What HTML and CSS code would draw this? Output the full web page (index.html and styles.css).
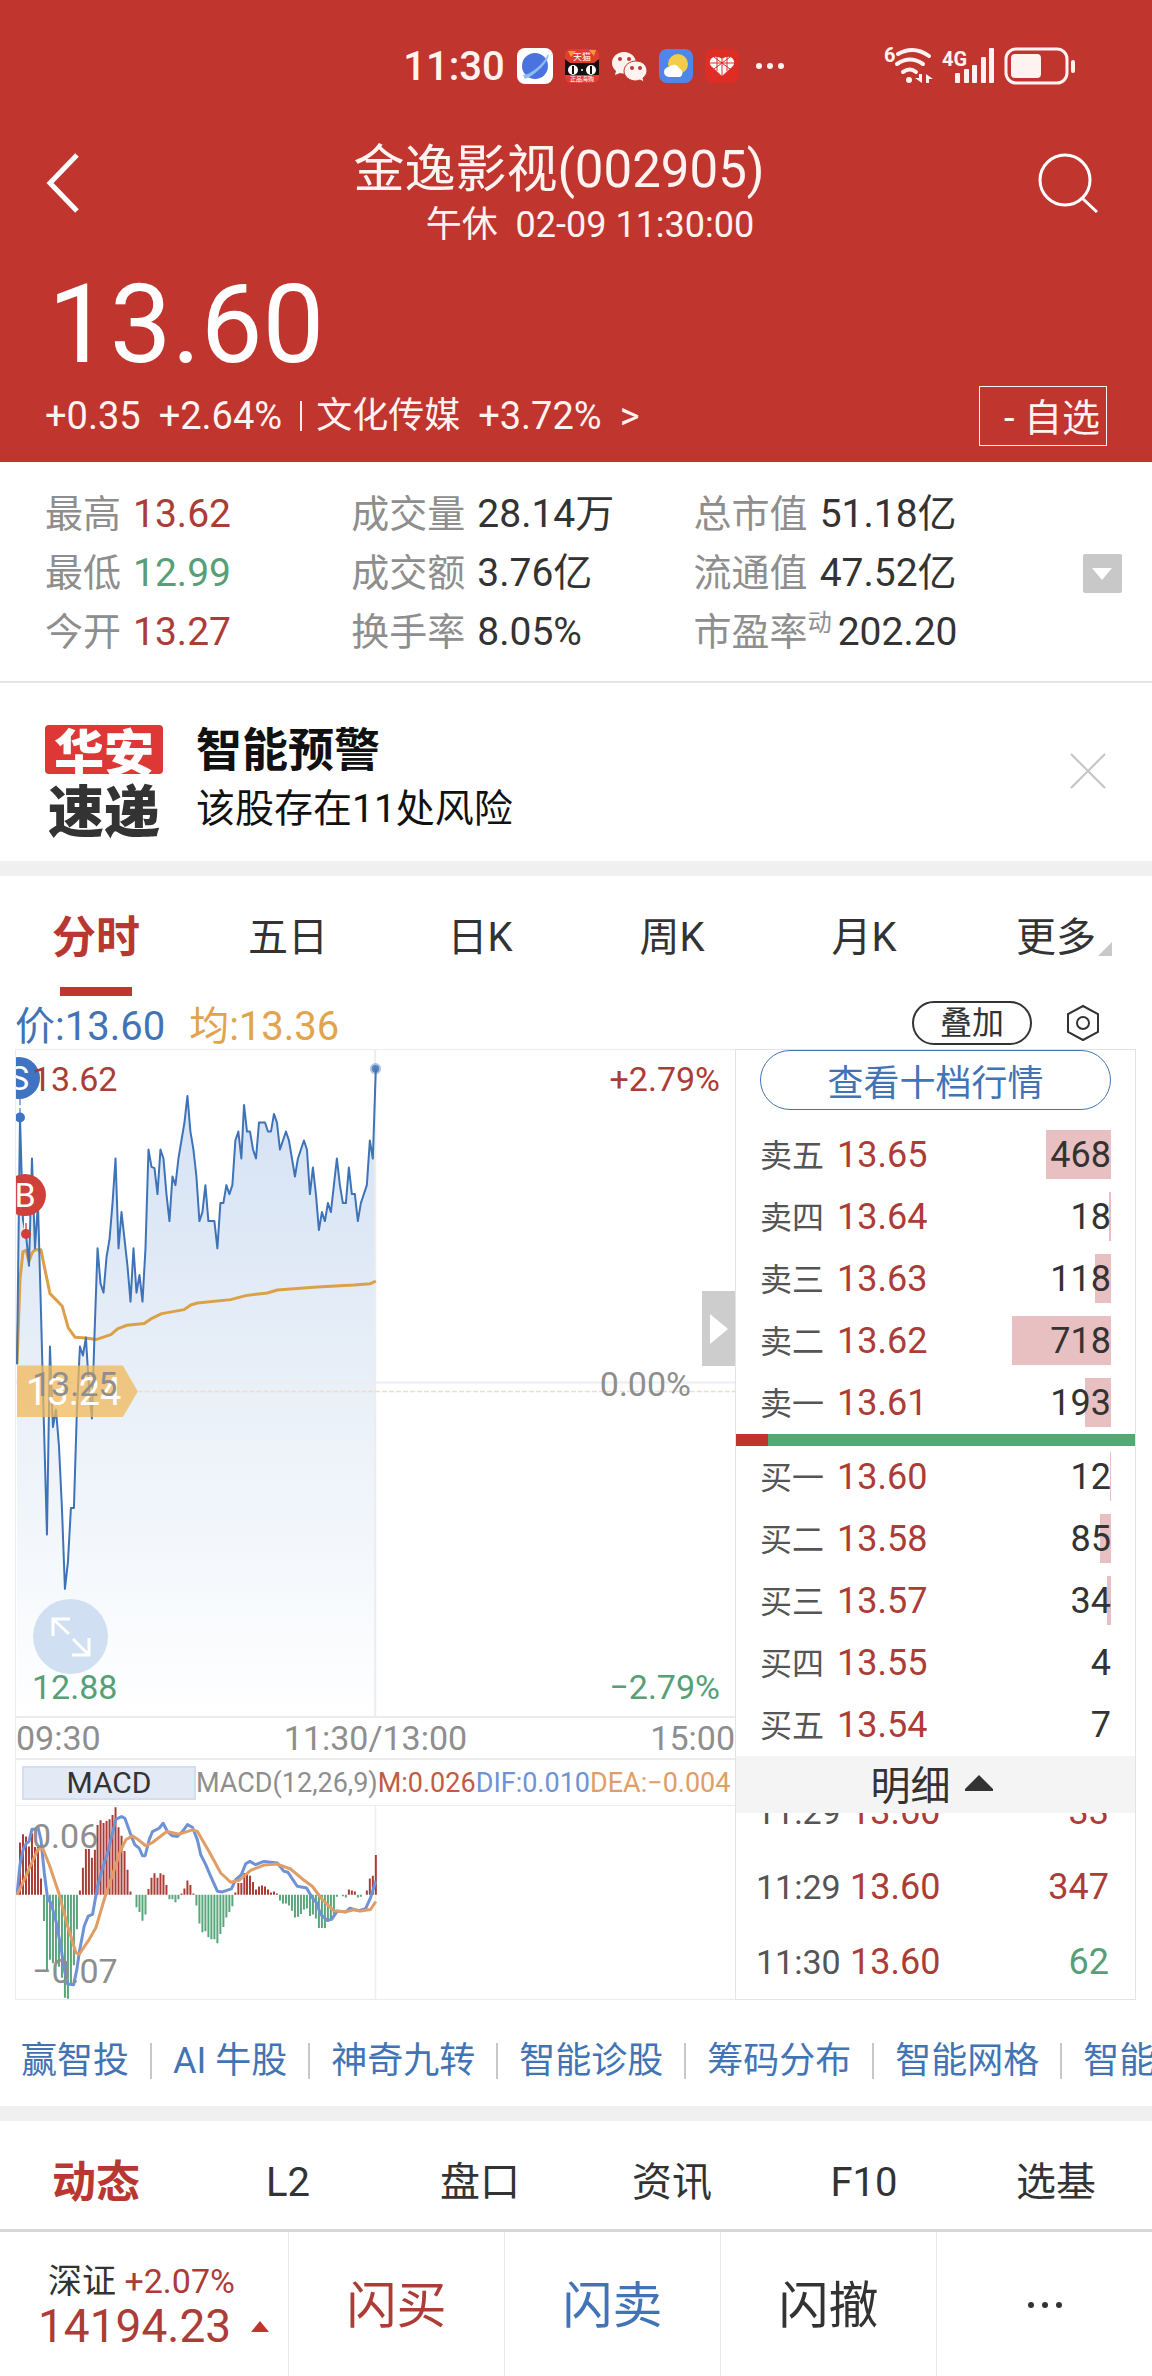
FILE: index.html
```html
<!DOCTYPE html>
<html lang="zh-CN">
  <head>
    <meta charset="utf-8">
    <meta name="viewport" content="width=device-width, initial-scale=1">
    <title>金逸影视(002905)</title>
    <link rel="stylesheet" href="styles.css">
  </head>

  <body>
    <header class="header">
      <div class="status">
        <span class="clock">11:30</span>
        <svg class="app" viewBox="0 0 36 36">
          <rect width="36" height="36" rx="8" fill="#fff" />
          <circle cx="18" cy="18" r="13" fill="#4a73dd" />
          <path d="M6 27C13 27 27 16 31 6C35 9 20 27 8 31Z" fill="#8fbcf5" />
        </svg>
        <svg class="app small" viewBox="0 0 34 34">
          <rect width="34" height="34" rx="6" fill="#e23d2c" />
          <path d="M3 2h8l-5 6zM24 1h7l-2 6z" fill="#f39a3c" />
          <text x="17" y="11" font-size="9" fill="#fff" text-anchor="middle">天猫</text>
          <path d="M0 10L5 14H29L34 10V26H0Z" fill="#15100f" />
          <ellipse cx="8" cy="21" rx="5" ry="5" fill="#fff" />
          <ellipse cx="26" cy="21" rx="5" ry="5" fill="#fff" />
          <path d="M8 17v8M26 17v8" stroke="#15100f" stroke-width="2" />
          <circle cx="17" cy="21" r="1" fill="#fff" />
          <text x="17" y="32" font-size="6" fill="#fff" text-anchor="middle">正品海购</text>
        </svg>
        <svg class="app" viewBox="0 0 36 34">
          <g fill="#fff3f2">
            <path d="M13 3C6 3 1 8 1 14c0 4 2 6 4 8l-1 4 5-2c8 2 16-2 16-10C25 8 20 3 13 3Z" />
            <path d="M25 12c-6 0-12 4-12 10s6 10 12 10l4-1 4 2-1-4c2-2 4-4 4-7 0-6-5-10-11-10Z" stroke="#c0362f" stroke-width="1" />
          </g>
          <g fill="#c0362f">
            <circle cx="9" cy="10" r="2" /><circle cx="18" cy="10" r="2" />
            <circle cx="21" cy="19" r="2" /><circle cx="29" cy="19" r="2" />
          </g>
        </svg>
        <svg class="app small" viewBox="0 0 34 34">
          <rect width="34" height="34" rx="8" fill="#4f86ea" />
          <circle cx="19" cy="15" r="10" fill="#f5cb4b" />
          <path d="M10 28a5 5 0 0 1 0-10a6 6 0 0 1 10 1a5 5 0 0 1 1 9Z" fill="#fff" />
        </svg>
        <svg class="app small" viewBox="0 0 34 34">
          <rect width="34" height="34" rx="8" fill="#de2d25" />
          <path d="M17 27L6 17C2 11 9 4 17 10C25 4 32 11 28 17Z" fill="#fff" />
          <path d="M17 10v17M9 8l16 12M25 8L9 20M5 14h24M12 7v15M22 7v15" stroke="#de2d25" stroke-width="1" />
        </svg>
        <svg class="dots" viewBox="0 0 30 8" fill="#fff3f2">
          <circle cx="4" cy="4" r="3" /><circle cx="15" cy="4" r="3" /><circle cx="26" cy="4" r="3" />
        </svg>
        <div class="signals">
          <svg width="50" height="38" viewBox="0 0 50 38" fill="none" stroke="#fff3f2" stroke-linecap="round">
            <text x="0" y="15" font-size="20" font-weight="700" fill="#fff3f2" stroke="none">6</text>
            <path d="M14 7Q30-2 45 9" stroke-width="4" />
            <path d="M13 17Q26 8 39 17" stroke-width="4" />
            <path d="M19 25Q26 20 32 25" stroke-width="4" />
            <circle cx="25" cy="33" r="3" fill="#fff3f2" stroke="none" />
            <path d="M38 27V36L31 31H35V27ZM42 27L49 32H45V36H42Z" fill="#fff3f2" stroke="none" />
          </svg>
          <svg width="54" height="38" viewBox="0 0 54 38" fill="#fff3f2">
            <text x="0" y="19" font-size="20" font-weight="700">4G</text>
            <rect x="13" y="26" width="5" height="10" rx="1" />
            <rect x="22" y="22" width="5" height="14" rx="1" />
            <rect x="30" y="18" width="5" height="18" rx="1" />
            <rect x="39" y="10" width="5" height="26" rx="1" />
            <rect x="47" y="1" width="5" height="35" rx="1" />
          </svg>
          <svg width="72" height="38" viewBox="0 0 72 38">
            <rect x="2" y="2" width="61" height="34" rx="10" fill="none" stroke="#fff3f2" stroke-width="3" />
            <rect x="7" y="7" width="30" height="24" rx="4" fill="#fff3f2" />
            <rect x="67" y="13" width="4" height="13" rx="2" fill="#fff3f2" />
          </svg>
        </div>
      </div>

      <div class="nav">
        <button class="icon-btn" aria-label="返回">
          <svg width="34" height="60" viewBox="0 0 34 60" fill="none" stroke="#fff" stroke-width="5"><path d="M31 2L4 30L31 58" /></svg>
        </button>
        <div class="title">
          <h1>金逸影视(002905)</h1>
          <p>午休&nbsp; 02-09 11:30:00</p>
        </div>
        <button class="icon-btn" aria-label="搜索">
          <svg width="60" height="60" viewBox="0 0 60 60" fill="none" stroke="#fff" stroke-width="3"><circle cx="27" cy="27" r="25" /><path d="M44 45L59 59" /></svg>
        </button>
      </div>

      <div class="price">13.60</div>
      <div class="change">
        <span>+0.35</span>
        <span class="pct">+2.64%</span>
        <span class="bar"></span>
        <a href="#sector">文化传媒<span class="pct">+3.72%</span><span class="pct">&gt;</span></a>
        <button class="fav">- 自选</button>
      </div>
    </header>

    <section class="stats">
      <dl>
        <div><dt>最高</dt><dd class="red">13.62</dd></div>
        <div><dt>最低</dt><dd class="green">12.99</dd></div>
        <div><dt>今开</dt><dd class="red">13.27</dd></div>
      </dl>
      <dl>
        <div><dt>成交量</dt><dd>28.14万</dd></div>
        <div><dt>成交额</dt><dd>3.76亿</dd></div>
        <div><dt>换手率</dt><dd>8.05%</dd></div>
      </dl>
      <dl>
        <div><dt>总市值</dt><dd>51.18亿</dd></div>
        <div><dt>流通值</dt><dd>47.52亿</dd></div>
        <div><dt class="pe">市盈率<sup>动</sup></dt><dd>202.20</dd></div>
      </dl>
      <button class="expand" aria-label="展开">
        <svg width="20" height="12" viewBox="0 0 20 12"><path d="M0 0H20L10 12Z" fill="#fff" /></svg>
      </button>
    </section>

    <section class="alert">
      <div class="logo"><b class="logo-top">华安</b><b>速递</b></div>
      <div class="alert-text">
        <h2>智能预警</h2>
        <p>该股存在11处风险</p>
      </div>
      <button class="icon-btn" aria-label="关闭">
        <svg width="36" height="36" viewBox="0 0 36 36" stroke="#c4c4c4" stroke-width="2"><path d="M1 1L35 35M35 1L1 35" /></svg>
      </button>
    </section>

    <nav class="tabs">
      <a class="active" href="#minute">分时</a>
      <a href="#five">五日</a>
      <a href="#day">日K</a>
      <a href="#week">周K</a>
      <a href="#month">月K</a>
      <a class="more" href="#more">更多</a>
    </nav>

    <div class="info">
      <span class="blue">价:13.60</span>
      <span class="orange">均:13.36</span>
      <button class="overlay">叠加</button>
      <button class="icon-btn" aria-label="设置">
        <svg width="34" height="38" viewBox="0 0 34 38" fill="none" stroke="#333" stroke-width="2"><path d="M17 2L32 10V28L17 36L2 28V10Z" /><circle cx="17" cy="19" r="6" /></svg>
      </button>
    </div>

    <main class="quote">
      <div class="left">
        <div class="chart">
          <svg class="plot" viewBox="45 30 2160 2001" preserveAspectRatio="none">
            <defs>
              <linearGradient id="fill" x1="0" y1="0" x2="0" y2="1">
                <stop offset="0" stop-color="#d3e1f4" />
                <stop offset="0.5" stop-color="#e9f0f8" />
                <stop offset="1" stop-color="#ffffff" />
              </linearGradient>
            </defs>
            <path id="area" fill="url(#fill)" />
            <path d="M45 1029H2205M1124 30V2031" stroke="#ebedf0" stroke-width="6" />
            <path d="M410 1056H2205" stroke="#ecdfca" stroke-width="5" stroke-dasharray="15 6" />
            <polyline class="line avg" points="48,974 57,720 66,636 75,632 84,665 93,640 102,630 120,630 130,680 147,762 165,780 184,800 202,865 222,893 255,895 285,900 330,885 350,868 378,857 430,852 450,838 483,822 550,810 570,796 590,790 690,780 735,768 800,760 830,751 950,742 1060,736 1110,732 1126,724" />
            <polyline class="line now" id="now" />
            <circle cx="1125" cy="86" r="17" fill="#3f73b8" opacity="0.4" />
            <circle cx="1125" cy="86" r="11" fill="#3f73b8" opacity="0.8" />
            <path d="M48 978H366L411 1056L366 1133H48Z" fill="#f0b85a" opacity="0.75" />
            <path d="M57 170V233" stroke="#8fb0de" stroke-width="6" stroke-dasharray="26 8" />
            <path d="M75 525V583" stroke="#fff" stroke-width="12" />
            <path d="M75 550V583" stroke="#d8817b" stroke-width="6" />
            <circle cx="57" cy="233" r="15" fill="#3f73c3" />
            <circle cx="75" cy="583" r="15" fill="#d0403a" />
          </svg>
          <span class="mark sell">S</span>
          <span class="mark buy">B</span>
          <span class="label high red">13.62</span>
          <span class="label now-tag">13.24</span>
          <span class="label mid">13.25</span>
          <span class="label low green">12.88</span>
          <span class="label right high red">+2.79%</span>
          <span class="label right mid zero">0.00%</span>
          <span class="label right low green">−2.79%</span>
          <button class="full" aria-label="全屏">
            <svg width="40" height="40" viewBox="0 0 40 40" fill="none" stroke="#fff" stroke-width="3"><path d="M2 19V2H19M2 2L18 17M22 22L38 38M38 21V38H21" /></svg>
          </button>
          <button class="fold" aria-label="收起">
            <svg width="18" height="30" viewBox="0 0 18 30"><path d="M0 0L18 15L0 30Z" fill="#fff" /></svg>
          </button>
        </div>
        <div class="axis"><span>09:30</span><span>11:30/13:00</span><span>15:00</span></div>
        <div class="macd-head">
          <button class="macd-btn">MACD</button>
          <span>MACD(12,26,9)</span><span class="m">M:0.026</span><span class="dif">DIF:0.010</span><span class="dea">DEA:−0.004</span>
        </div>
        <div class="macd">
          <svg class="plot" viewBox="45 198 2160 582" preserveAspectRatio="none">
            <path d="M1125 198V780" stroke="#eeeeee" stroke-width="5" />
            <path id="up" stroke="#a93c37" stroke-width="6" />
            <path id="down" stroke="#5aa67b" stroke-width="6" />
            <polyline class="line dif-line" points="48,466 57,375 66,330 75,312 84,305 93,268 102,268 111,262 120,300 130,400 140,478 150,490 165,545 180,625 192,700 200,735 218,737 228,690 235,640 250,560 262,530 275,525 290,440 305,385 320,340 345,238 362,230 372,235 390,285 402,315 415,325 425,348 433,348 445,300 455,275 475,265 487,250 500,275 515,288 530,290 545,275 560,254 575,262 590,300 600,345 615,375 630,410 650,455 665,457 692,448 705,420 722,405 735,372 748,365 765,375 790,365 830,370 850,395 862,398 890,440 918,445 935,475 948,490 960,525 980,543 993,540 1010,515 1035,518 1048,506 1075,514 1095,508 1110,475 1126,424" />
            <polyline class="line dea-line" points="48,466 70,420 90,375 110,330 125,325 145,375 175,465 200,560 225,640 235,645 265,600 285,565 310,480 340,390 360,330 375,300 395,288 410,298 435,318 455,308 498,275 535,283 575,270 590,275 625,335 660,400 690,428 715,422 750,392 790,376 830,373 870,388 905,418 935,440 965,480 1000,514 1035,517 1060,511 1080,515 1110,510 1126,486" />
          </svg>
          <span class="label top">0.06</span>
          <span class="label bottom">−0.07</span>
        </div>
      </div>

      <div class="book">
        <button class="ten">查看十档行情</button>
        <table class="orders">
          <tr><th>卖五</th><td class="red">13.65</td><td class="qty"><i style="width: 65px"></i><span>468</span></td></tr>
          <tr><th>卖四</th><td class="red">13.64</td><td class="qty"><i style="width: 2px"></i><span>18</span></td></tr>
          <tr><th>卖三</th><td class="red">13.63</td><td class="qty"><i style="width: 16px"></i><span>118</span></td></tr>
          <tr><th>卖二</th><td class="red">13.62</td><td class="qty"><i style="width: 99px"></i><span>718</span></td></tr>
          <tr><th>卖一</th><td class="red">13.61</td><td class="qty"><i style="width: 26px"></i><span>193</span></td></tr>
        </table>
        <div class="ratio"><i style="width: 8%"></i></div>
        <table class="orders">
          <tr><th>买一</th><td class="red">13.60</td><td class="qty"><i style="width: 1px"></i><span>12</span></td></tr>
          <tr><th>买二</th><td class="red">13.58</td><td class="qty"><i style="width: 11px"></i><span>85</span></td></tr>
          <tr><th>买三</th><td class="red">13.57</td><td class="qty"><i style="width: 4px"></i><span>34</span></td></tr>
          <tr><th>买四</th><td class="red">13.55</td><td class="qty"><span>4</span></td></tr>
          <tr><th>买五</th><td class="red">13.54</td><td class="qty"><span>7</span></td></tr>
        </table>
        <button class="detail">明细
          <svg width="28" height="16" viewBox="0 0 28 16"><path d="M14 0L28 14V16H0V14Z" fill="#333" /></svg>
        </button>
        <div class="trades">
          <table>
            <tr><th>11:29</th><td class="red">13.60</td><td class="vol red">33</td></tr>
            <tr><th>11:29</th><td class="red">13.60</td><td class="vol red">347</td></tr>
            <tr><th>11:30</th><td class="red">13.60</td><td class="vol green">62</td></tr>
          </table>
        </div>
      </div>
    </main>

    <nav class="links">
      <a href="#1">赢智投</a>
      <a href="#2">AI 牛股</a>
      <a href="#3">神奇九转</a>
      <a href="#4">智能诊股</a>
      <a href="#5">筹码分布</a>
      <a href="#6">智能网格</a>
      <a href="#7">智能盯盘</a>
    </nav>

    <nav class="tabs sub-tabs">
      <a class="active" href="#news">动态</a>
      <a href="#l2">L2</a>
      <a href="#pan">盘口</a>
      <a href="#info">资讯</a>
      <a href="#f10">F10</a>
      <a href="#fund">选基</a>
    </nav>

    <footer class="bottom">
      <a class="index" href="#sz">
        <span class="name">深证 <span class="red">+2.07%</span></span>
        <span class="num red">14194.23
          <svg width="18" height="11" viewBox="0 0 18 11"><path d="M9 0L18 11H0Z" fill="#c0362f" /></svg>
        </span>
      </a>
      <button class="red">闪买</button>
      <button class="blue">闪卖</button>
      <button>闪撤</button>
      <button aria-label="更多">
        <svg width="36" height="6" viewBox="0 0 36 6" fill="#333"><circle cx="4" cy="3" r="3" /><circle cx="18" cy="3" r="3" /><circle cx="32" cy="3" r="3" /></svg>
      </button>
    </footer>
    <script src="script.js"></script>
  </body>
</html>
```
FILE: styles.css
```css
* {
  box-sizing: border-box;
}
body {
  margin: 0;
  background: #fff;
  color: #333;
  font-family: Roboto, "Noto Sans CJK SC", sans-serif;
  font-size: 38px;
  overflow-x: hidden;
}
h1,
h2,
p,
dl,
dd {
  margin: 0;
  font-weight: 400;
}
button {
  font: inherit;
  color: inherit;
  background: none;
  border: 0;
  padding: 0;
  cursor: pointer;
}
a {
  color: inherit;
  text-decoration: none;
}
i {
  display: block;
}
svg {
  display: block;
}
table {
  width: 100%;
  border-collapse: collapse;
}
.red {
  color: #ab3c36;
}
.green {
  color: #57a077;
}
.blue {
  color: #4274b5;
}
.orange {
  color: #e2a34c;
}
.icon-btn {
  display: flex;
}

/* header */
.header {
  background: #c0362f;
  color: #fff3f2;
  padding-bottom: 14px;
}
.status {
  display: flex;
  align-items: center;
  gap: 12px;
  height: 132px;
  padding: 0 76px 0 35%;
}
.clock {
  font-size: 40px;
  font-weight: 500;
}
.app {
  width: 36px;
  height: 36px;
}
.app.small {
  width: 34px;
  height: 34px;
}
.dots {
  width: 30px;
  margin-left: 4px;
}
.signals {
  display: flex;
  gap: 8px;
  margin-left: auto;
}
.nav {
  display: flex;
  align-items: center;
  justify-content: space-between;
  height: 124px;
  padding: 0 54px 22px 46px;
}
.title {
  text-align: center;
  padding-top: 24px;
}
.title h1 {
  font-size: 51px;
  line-height: 60px;
}
.title p {
  font-size: 36px;
  line-height: 50px;
  padding-left: 62px;
}
.price {
  color: #fff;
  font-size: 110px;
  line-height: 126px;
  padding: 6px 0 0 48px;
}
.change {
  display: flex;
  align-items: center;
  height: 60px;
  padding: 0 45px 4px;
}
.change a {
  display: flex;
  align-items: center;
  font-size: 36px;
  line-height: 44px;
}
.change .pct {
  margin-left: 18px;
  font-size: 38px;
}
.bar {
  width: 2px;
  height: 30px;
  margin: 0 14px 0 18px;
  background: #fff3f2;
}
.fav {
  margin-left: auto;
  height: 60px;
  padding: 0 6px 4px 24px;
  border: 1px solid #fff3f2;
}

/* stats */
.stats {
  display: grid;
  grid-template-columns: 306fr 342fr 389fr auto;
  align-items: center;
  padding: 23px 30px 19px 45px;
  border-bottom: 2px solid #e5e5e5;
}
.stats dl div {
  display: flex;
  line-height: 59px;
}
.stats dt {
  color: #8e8e8e;
  margin-right: 12px;
}
.stats dd {
  font-size: 39px;
}
.stats .pe {
  margin-right: 6px;
}
.stats sup {
  font-size: 24px;
  line-height: 24px;
}
.expand {
  display: flex;
  align-items: center;
  justify-content: center;
  width: 39px;
  height: 39px;
  background: #c8c8c8;
  border-radius: 2px;
}

/* alert */
.alert {
  display: flex;
  align-items: center;
  padding: 38px 46px 22px 45px;
  border-bottom: 15px solid #f0f0f0;
}
.logo {
  width: 118px;
  font-family: "Noto Sans CJK SC", sans-serif;
  text-align: center;
  font-size: 56px;
  line-height: 56px;
}
.logo b {
  display: block;
  font-weight: 900;
}
.logo .logo-top {
  background: #de3836;
  color: #fff;
  border-radius: 4px;
  line-height: 49px;
  margin-bottom: 6px;
  font-size: 50px;
}
.alert-text {
  flex: 1;
  margin-left: 33px;
  color: #111;
  font-size: 39px;
  line-height: 59px;
}
.alert-text h2 {
  font-size: 46px;
  font-weight: 700;
}
.alert .icon-btn {
  margin-bottom: 18px;
}

/* tabs */
.tabs {
  display: grid;
  grid-template-columns: repeat(6, 1fr);
  font-size: 40px;
}
.tabs a {
  position: relative;
  height: 120px;
  line-height: 124px;
  text-align: center;
}
.tabs .active {
  color: #b93731;
  font-size: 44px;
  font-weight: 700;
}
.tabs .active::after {
  content: "";
  position: absolute;
  left: 60px;
  right: 60px;
  bottom: 0;
  height: 9px;
  background: #c0362f;
}
.tabs .more::after {
  content: "";
  position: absolute;
  right: 40px;
  bottom: 40px;
  border: 7px solid;
  border-color: transparent #c8c8c8 #c8c8c8 transparent;
}
.info {
  display: flex;
  align-items: center;
  gap: 24px;
  height: 53px;
  padding: 0 52px 0 15px;
  font-size: 40px;
}
.overlay {
  margin: 0 10px 0 auto;
  width: 120px;
  height: 44px;
  border: 2px solid #333;
  border-radius: 22px;
  font-size: 32px;
  line-height: 40px;
}

/* quote */
.quote {
  display: grid;
  grid-template-columns: 720fr 401fr;
  margin: 0 16px 0 15px;
}
.left {
  border: 1px solid #ececec;
  border-right: 0;
  color: #8e8e8e;
  font-size: 34px;
  min-width: 0;
}
.chart {
  position: relative;
  height: 666px;
  overflow: hidden;
}
.plot {
  width: 100%;
  height: 100%;
}
.line {
  fill: none;
  stroke-width: 3px;
  stroke-linejoin: round;
  vector-effect: non-scaling-stroke;
}
.now {
  stroke: #3f73b8;
  stroke-width: 2px;
}
.avg {
  stroke: #dca047;
}
.dif-line {
  stroke: #6f92d6;
}
.dea-line {
  stroke: #e09d66;
}
.label {
  position: absolute;
  left: 16px;
  line-height: 40px;
}
.label.right {
  left: auto;
  right: 15px;
}
.high {
  top: 9px;
}
.mid {
  top: 314px;
}
.zero.right {
  right: 44px;
}
.low {
  bottom: 9px;
}
.now-tag {
  top: 322px;
  left: 10px;
  color: #fff;
  font-size: 38px;
}
.top {
  top: 10px;
}
.bottom.label {
  bottom: 8px;
}
.mark {
  position: absolute;
  width: 42px;
  height: 42px;
  border-radius: 50%;
  color: #fff;
  line-height: 42px;
  text-align: center;
}
.sell {
  left: -18px;
  top: 7px;
  background: #3f73c3;
}
.buy {
  left: -12px;
  top: 124px;
  background: #d0403a;
}
.full {
  position: absolute;
  left: 17px;
  bottom: 42px;
  display: flex;
  align-items: center;
  justify-content: center;
  width: 75px;
  height: 75px;
  border-radius: 50%;
  background: #d0dff1;
}
.fold {
  position: absolute;
  right: 0;
  top: 241px;
  display: flex;
  align-items: center;
  justify-content: center;
  width: 33px;
  height: 75px;
  background: #cdcdcd;
}
.axis {
  display: flex;
  justify-content: space-between;
  border: solid #ececec;
  border-width: 2px 0;
  line-height: 40px;
}
.macd-head {
  display: flex;
  align-items: center;
  height: 45px;
  padding-left: 6px;
  font-size: 27px;
  white-space: nowrap;
}
.macd-btn {
  width: 174px;
  height: 34px;
  background: #e3e9f5;
  border: 2px solid #d3dff1;
  color: #333;
  font-size: 30px;
  line-height: 30px;
}
.m {
  color: #c25b44;
}
.dif {
  color: #6f92d6;
}
.dea {
  color: #e09d66;
}
.macd {
  position: relative;
  height: 194px;
  border-top: 1px solid #ececec;
}

/* order book */
.book {
  display: flex;
  flex-direction: column;
  border: 1px solid #e3e3e3;
  min-width: 0;
  font-size: 36px;
}
.ten {
  height: 60px;
  margin: 0 24px 14px;
  border: 1px solid #4274b5;
  border-radius: 30px;
  color: #4274b5;
}
.orders tr {
  height: 62px;
}
.orders th,
.orders td {
  padding: 0;
}
.orders th {
  width: 101px;
  padding: 0 0 4px 24px;
  color: #555;
  font-size: 32px;
  font-weight: 400;
  text-align: left;
}
.orders .qty {
  position: relative;
  padding-right: 24px;
  text-align: right;
}
.qty i {
  position: absolute;
  right: 24px;
  top: 6px;
  height: 49px;
  background: #e8c0c1;
}
.qty span {
  position: relative;
}
.ratio {
  height: 12px;
  background: #53a873;
}
.ratio i {
  height: 12px;
  background: #c0362f;
}
.detail {
  display: flex;
  align-items: center;
  justify-content: center;
  gap: 14px;
  height: 57px;
  padding: 0 8px 4px 0;
  background: #f4f4f4;
  font-size: 40px;
}
/* newest rows stay at the bottom, the oldest one slides under the bar */
.trades {
  display: flex;
  flex-direction: column;
  justify-content: flex-end;
  height: 186px;
  overflow: hidden;
}
.trades tr {
  height: 75px;
}
.trades th,
.trades td {
  padding: 0;
}
.trades th {
  width: 114px;
  padding-left: 20px;
  color: #555;
  font-size: 34px;
  font-weight: 400;
  text-align: left;
}
.trades .vol {
  padding-right: 26px;
  text-align: right;
}

/* links */
.links {
  display: flex;
  height: 106px;
  padding-top: 16px;
  align-items: center;
  overflow: hidden;
  white-space: nowrap;
  color: #4274b5;
  font-size: 36px;
}
.links a {
  padding: 0 21px;
  line-height: 36px;
  flex: none;
}
.links a + a {
  border-left: 2px solid #c8c8c8;
}
.sub-tabs {
  border-top: 15px solid #f0f0f0;
  border-bottom: 3px solid #d6d6d6;
  height: 126px;
}
.sub-tabs a {
  height: 108px;
}
.sub-tabs .active::after {
  display: none;
}

/* bottom bar */
.bottom {
  display: grid;
  grid-template-columns: 4fr 3fr 3fr 3fr 3fr;
}
.bottom > button {
  display: flex;
  align-items: center;
  justify-content: center;
  padding-bottom: 8px;
  border-left: 1px solid #e8e8e8;
  font-size: 50px;
}
.bottom > button svg {
  margin-top: 8px;
}
.index {
  display: flex;
  flex-direction: column;
  padding: 27px 0 28px 38px;
}
.name {
  padding-left: 10px;
  font-size: 34px;
  line-height: 44px;
}
.num {
  display: flex;
  align-items: center;
  gap: 20px;
  font-size: 46px;
  line-height: 46px;
}
```
FILE: script.js
```js
// one value for each minute, 9 units apart
var prices = [
  974, 233, 540, 583, 678, 356, 626, 490, 815, 1160, 1486, 921, 1163, 1110, 1218,
  1406, 1649, 1568, 1406, 1406, 1110, 921, 948, 894, 1040, 1137, 880, 626, 732, 759,
  652, 598, 490, 356, 626, 517, 598, 680, 786, 626, 759, 706, 786, 626, 329,
  381, 385, 463, 329, 356, 463, 544, 410, 436, 356, 302, 248, 168, 275, 329,
  410, 544, 517, 436, 544, 544, 544, 626, 490, 490, 436, 463, 436, 302, 275,
  356, 195, 275, 275, 329, 356, 248, 248, 248, 275, 275, 222, 248, 329, 302,
  275, 302, 356, 410, 356, 329, 302, 329, 463, 383, 463, 571, 517, 544, 490,
  517, 436, 356, 436, 490, 490, 383, 463, 463, 544, 490, 463, 436, 302, 356, 86
];
var macd = [
  308, 283, 290, 320, 280, 322, 322, 417, 545, 698, 662, 672, 675, 683, 716,
  776, 779, 735, 678, 570, 453, 384, 328, 328, 354, 330, 255, 241, 249, 243,
  238, 225, 202, 262, 288, 334, 390, 456, 466, 503, 518, 544, 525, 448, 414,
  401, 414, 401, 405, 436, 479, 479, 488, 479, 462, 447, 423, 436, 462, 498,
  552, 579, 576, 594, 600, 600, 612, 584, 563, 534, 518, 500, 459, 430, 430,
  400, 403, 408, 427, 450, 441, 438, 441, 450, 459, 456, 462, 483, 492, 492,
  498, 514, 534, 532, 524, 510, 507, 530, 525, 537, 566, 566, 566, 548, 540,
  525, 472, 466, 470, 474, 450, 453, 456, 474, 472, 466, 453, 417, 408, 346
];
var zero = 466;

function drawPrice() {
  var points = "";
  for (var i = 0; i < prices.length; i++) {
    points += Math.round(48 + i * 8.98) + "," + prices[i] + " ";
  }
  document.getElementById("now").setAttribute("points", points);
  document.getElementById("area").setAttribute("d", "M48,2031 L" + points + "L1126,2031 Z");
}

function drawMacd() {
  var up = "";
  var down = "";
  for (var i = 0; i < macd.length; i++) {
    var bar = "M" + Math.round(57 + i * 8.98) + " " + zero + "V" + macd[i];
    if (macd[i] < zero) {
      up += bar;
    } else {
      down += bar;
    }
  }
  document.getElementById("up").setAttribute("d", up);
  document.getElementById("down").setAttribute("d", down);
}

drawPrice();
drawMacd();
```
